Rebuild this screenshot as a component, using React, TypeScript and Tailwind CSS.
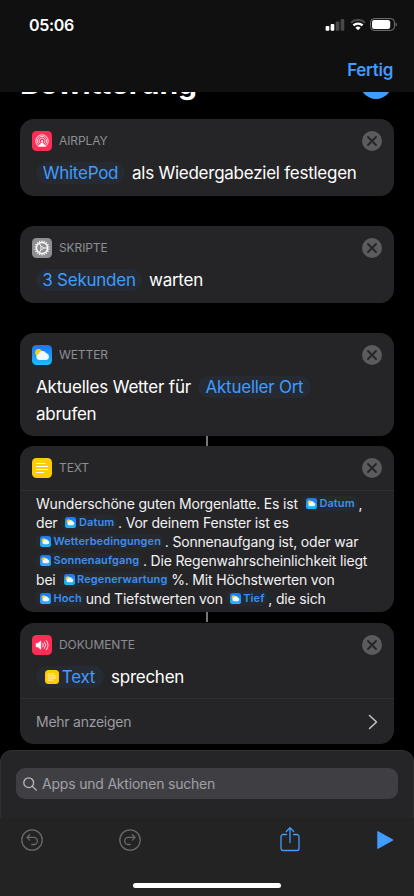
import { ReactNode } from 'react'
import clsx from 'clsx'

type AppKind = 'airplay' | 'skripte' | 'wetter' | 'text' | 'dokumente'

const TILE_COLORS: Record<AppKind, string> = {
    airplay: 'bg-[#ff2d55]',
    skripte: 'bg-[#8e8e93]',
    wetter: 'bg-linear-to-b from-[#2173f0] to-[#1fbcfb]',
    text: 'bg-[#ffcc00]',
    dokumente: 'bg-[#ff2d55]',
}

const TEETH = Array.from({ length: 18 }, (_, i) => i * 20)

function AppGlyph({ kind }: { kind: AppKind }) {
    return (
        <svg viewBox="0 0 20 20" className="block w-full h-full" fill="none" stroke="white">
            {kind === 'airplay' && (
                <>
                    <path d="M5.8 14.6a6.2 6.2 0 1 1 8.4 0" strokeWidth="0.9" />
                    <path d="M6.8 13.3a4.6 4.6 0 1 1 6.4 0" strokeWidth="0.8" />
                    <path d="M7.9 12a2.9 2.9 0 1 1 4.2 0" strokeWidth="0.8" />
                    <circle cx="10" cy="10" r="1.1" fill="white" stroke="none" />
                    <path d="M10 11.2l4.1 4.2H5.9z" fill="white" strokeWidth="0.5" strokeLinejoin="round" />
                </>
            )}
            {kind === 'skripte' && (
                <>
                    {TEETH.map((angle) => (
                        <path key={angle} d="M10 2.5v1.8" strokeWidth="1.1" transform={`rotate(${angle} 10 10)`} />
                    ))}
                    <circle cx="10" cy="10" r="5.5" strokeWidth="1.3" />
                    <circle cx="10" cy="10" r="1.4" strokeWidth="0.8" />
                    <path d="M11.4 10h4M9.3 8.8L7.2 5.3M9.3 11.2l-2.1 3.5" strokeWidth="1" />
                </>
            )}
            {kind === 'wetter' && (
                <>
                    <circle cx="6.6" cy="7.5" r="3.5" fill="#ffcc10" stroke="none" />
                    <path
                        d="M7 15a2.9 2.9 0 0 1-.5-5.7 4.1 4.1 0 0 1 7.7-1 3.4 3.4 0 0 1-.2 6.7z"
                        fill="#eff8ff"
                        stroke="none"
                    />
                </>
            )}
            {kind === 'text' && (
                <path d="M4.4 5.5h8.6M4.4 8.5h11.2M4.4 11.5h11.2M4.4 14.5h7.2" strokeWidth="1.1" strokeLinecap="round" />
            )}
            {kind === 'dokumente' && (
                <>
                    <path d="M4 8.3h1.9l3-2.5v8.8l-3-2.5H4z" fill="white" strokeWidth="0.4" strokeLinejoin="round" />
                    <path
                        d="M10.8 8.5a3 3 0 0 1 0 3.4M12.5 7a5.2 5.2 0 0 1 0 6.4M14.3 5.5a7.6 7.6 0 0 1 0 9.4"
                        strokeWidth="0.9"
                        strokeLinecap="round"
                    />
                </>
            )}
        </svg>
    )
}

function AppTile({ kind, className }: { kind: AppKind; className?: string }) {
    return (
        <span className={clsx('block shrink-0 overflow-hidden', TILE_COLORS[kind], className)}>
            <AppGlyph kind={kind} />
        </span>
    )
}

function StatusBar() {
    return (
        <div className="flex justify-between h-[50px] pl-[29px] pr-[17px]">
            <span className="mt-[15px] text-[16px] leading-5 font-semibold tracking-[-0.3px]">05:06</span>
            <div className="flex items-start gap-[5px] mt-[18px]">
                <svg width="20" height="13" viewBox="0 0 20 13" className="mt-px">
                    <rect x="0.6" y="7" width="3.7" height="4.7" rx="1" fill="white" />
                    <rect x="5.6" y="5" width="3.7" height="6.7" rx="1" fill="white" />
                    <rect x="10.7" y="2.6" width="3.7" height="9.1" rx="1" fill="#48484a" />
                    <rect x="15.6" y="0" width="3.7" height="11.7" rx="1" fill="#48484a" />
                </svg>
                <svg width="16" height="13" viewBox="0 0 16 13" fill="none">
                    <path d="M1 4.7a10.2 10.2 0 0 1 14 0" stroke="#48484a" strokeWidth="2.2" />
                    <path d="M3.4 7.4a6.7 6.7 0 0 1 9.2 0" stroke="white" strokeWidth="2.2" />
                    <path d="M8 12.2L5.4 9.7a3.8 3.8 0 0 1 5.2 0z" fill="white" />
                </svg>
                <svg width="27" height="13" viewBox="0 0 27 13" fill="none" className="-ml-px">
                    <rect x="0.6" y="0.6" width="23.8" height="11.8" rx="3.6" stroke="#77777a" strokeWidth="1" />
                    <rect x="2" y="2" width="18.2" height="9" rx="2.2" fill="white" />
                    <path d="M25.6 4.5c1 .4 1.2 1.2 1.2 2s-.2 1.6-1.2 2z" fill="#77777a" />
                </svg>
            </div>
        </div>
    )
}

function CloseButton() {
    return (
        <button className="ml-auto w-5 h-5 rounded-full bg-[#5b5b5d]" aria-label="Entfernen">
            <svg viewBox="0 0 20 20" fill="none" stroke="#252527" strokeWidth="1.9" strokeLinecap="round">
                <path d="M6 6l8 8M14 6l-8 8" />
            </svg>
        </button>
    )
}

function Card({ kind, title, className, children }: {
    kind: AppKind
    title: string
    className: string
    children: ReactNode
}) {
    return (
        <section className={clsx('mx-5 shrink-0 rounded-[14px] bg-[#252527] overflow-hidden', className)}>
            <div className="flex items-center h-5 mt-3 mx-3">
                <AppTile kind={kind} className="w-5 h-5 rounded-[4.5px]" />
                <h2 className="ml-[7px] text-[12px] text-[#8d8d92] tracking-[-0.1px]">{title}</h2>
                <CloseButton />
            </div>
            {children}
        </section>
    )
}

function Row({ className, children }: { className?: string; children: ReactNode }) {
    return (
        <div className={clsx('flex items-center h-[27px] pl-4 text-[17px] tracking-[-0.25px] whitespace-nowrap [&>span]:pt-0.5', className)}>
            {children}
        </div>
    )
}

function Chip({ className, children }: { className?: string; children: ReactNode }) {
    return (
        <span className={clsx('flex items-center justify-center h-[22px] rounded-full bg-[#252a33] text-[#409cff]', className)}>
            {children}
        </span>
    )
}

function Variable({ className, children }: { className?: string; children: ReactNode }) {
    return (
        <span
            className={clsx(
                'inline-flex items-center gap-[2.5px] h-[15px] pl-1 pr-0.5 -mr-[2px] rounded-[5px] bg-[#252930]',
                'text-[11px] font-semibold text-[#3c8ff0] tracking-[0.1px]',
                className
            )}
        >
            <AppTile kind="wetter" className="w-[11px] h-[11px] rounded-[2.5px]" />
            {children}
        </span>
    )
}

function Line({ children }: { children: ReactNode }) {
    return <div className="flex items-center h-[19px] whitespace-pre">{children}</div>
}

function Connector() {
    return <div className="self-center shrink-0 w-0.5 h-[10px] bg-[#77777b]" />
}

export default function App() {
    return (
        <div className="flex flex-col w-full h-[896px] overflow-hidden bg-black text-white font-[Inter,sans-serif]">
            <header className="relative z-10 shrink-0 h-[92px] bg-[#101010]">
                <StatusBar />
                <div className="flex justify-end pr-[21px] pt-2">
                    <button className="text-[17px] leading-6 font-semibold text-[#409cff] tracking-[-0.3px]">Fertig</button>
                </div>
            </header>

            {/* Title scrolls under the header */}
            <div className="flex justify-between shrink-0 h-12 -mt-[21px] pl-[20px] pr-[22px]">
                <h1 className="text-[30px] leading-[24px] font-bold tracking-[-0.1px]">Bewitterung</h1>
                <div className="w-8 h-7 rounded-b-full bg-[#409cff]" />
            </div>

            <Card kind="airplay" title="AIRPLAY" className="h-[77px]">
                <Row className="mt-2">
                    <Chip className="w-[89px]">WhitePod</Chip>
                    <span className="ml-[7px]">als Wiedergabeziel festlegen</span>
                </Row>
            </Card>

            <Card kind="skripte" title="SKRIPTE" className="h-[77px] mt-[30px]">
                <Row className="mt-2">
                    <Chip className="w-[106px]">3 Sekunden</Chip>
                    <span className="ml-[7px]">warten</span>
                </Row>
            </Card>

            <Card kind="wetter" title="WETTER" className="h-[103px] mt-[30px]">
                <Row className="mt-2">
                    <span className="w-[162px] tracking-[-0.18px]">Aktuelles Wetter für</span>
                    <Chip className="w-[113px]">Aktueller Ort</Chip>
                </Row>
                <Row>
                    <span>abrufen</span>
                </Row>
            </Card>

            <Connector />

            <Card kind="text" title="TEXT" className="h-[166px]">
                <div className="mt-3 pt-[3px] pl-4 border-t border-[#303033] text-[14px] text-[#f2f2f4] tracking-[-0.18px]">
                    <Line>
                        Wunderschöne guten Morgenlatte. Es ist<Variable className="ml-1">Datum</Variable> ,
                    </Line>
                    <Line>
                        der<Variable className="ml-1">Datum</Variable> . Vor deinem Fenster ist es
                    </Line>
                    <Line>
                        <Variable>Wetterbedingungen</Variable> . Sonnenaufgang ist, oder war
                    </Line>
                    <Line>
                        <Variable>Sonnenaufgang</Variable> . Die Regenwahrscheinlichkeit liegt
                    </Line>
                    <Line>
                        bei<Variable className="ml-1">Regenerwartung</Variable> %. Mit Höchstwerten von
                    </Line>
                    <Line>
                        <Variable>Hoch</Variable> und Tiefstwerten von<Variable className="ml-[3px]">Tief</Variable> , die sich
                    </Line>
                </div>
            </Card>

            <Connector />

            <Card kind="dokumente" title="DOKUMENTE" className="h-[121px] mt-px">
                <Row className="mt-2">
                    <Chip className="w-[68px] gap-[3px]">
                        <AppTile kind="text" className="w-[14px] h-[14px] -mt-0.5 rounded-[3.5px]" />
                        Text
                    </Chip>
                    <span className="ml-[7px]">sprechen</span>
                </Row>
                <div className="flex items-center justify-between h-[46px] mt-2 pl-4 pr-4 border-t border-[#303033]">
                    <span className="text-[14px] text-[#9b9ba1] tracking-[-0.25px]">Mehr anzeigen</span>
                    <svg width="10" height="16" viewBox="0 0 10 16" fill="none" stroke="#c5c5ca" strokeWidth="1.5" strokeLinecap="round" strokeLinejoin="round">
                        <path d="M1.5 1.5L8.5 8l-7 6.5" />
                    </svg>
                </div>
            </Card>

            <div className="shrink-0 h-[68px] mt-1.5 px-[15px] pt-[17px] rounded-t-[12px] bg-[#252527] border border-b-0 border-[#303032]">
                <div className="flex items-center h-[31px] pl-[7px] rounded-[9px] bg-[#3f3e43]">
                    <svg width="14" height="14" viewBox="0 0 14 14" fill="none" stroke="#b9b9bf" strokeWidth="1.3" strokeLinecap="round">
                        <circle cx="5.7" cy="5.7" r="4.9" />
                        <path d="M9.3 9.3l4 3.8" />
                    </svg>
                    <span className="ml-[5px] text-[14px] text-[#a0a0a7] tracking-[-0.2px]">Apps und Aktionen suchen</span>
                </div>
            </div>

            <footer className="flex flex-col shrink-0 h-[78px] bg-[#232323]">
                <div className="flex items-center h-11 pl-[21px]">
                    <svg width="22" height="22" viewBox="0 0 22 22" fill="none" stroke="#69696b" strokeWidth="1.3" strokeLinecap="round" strokeLinejoin="round">
                        <circle cx="11" cy="11" r="10.2" />
                        <path d="M8.7 5.7L5.9 8.4l2.8 2.7M6 8.4h6.8a3.5 3.5 0 0 1 0 7.1h-2" />
                    </svg>
                    <svg width="22" height="22" viewBox="0 0 22 22" fill="none" stroke="#69696b" strokeWidth="1.3" strokeLinecap="round" strokeLinejoin="round" className="ml-[76px]">
                        <circle cx="11" cy="11" r="10.2" />
                        <path d="M13.3 5.7l2.8 2.7-2.8 2.7M16 8.4H9.2a3.5 3.5 0 0 0 0 7.1h2" />
                    </svg>
                    <svg width="20" height="26" viewBox="0 0 20 26" fill="none" stroke="#409cff" strokeWidth="1.3" strokeLinecap="round" strokeLinejoin="round" className="ml-[139px] -mt-0.5">
                        <path d="M6.5 8.5H3.2A2.2 2.2 0 0 0 1 10.7v11.6a2.2 2.2 0 0 0 2.2 2.2h13.6a2.2 2.2 0 0 0 2.2-2.2V10.7a2.2 2.2 0 0 0-2.2-2.2h-3.3" />
                        <path d="M10 16.5V2M6.3 5.5L10 1.7l3.7 3.8" />
                    </svg>
                    <svg width="18" height="20" viewBox="0 0 18 20" fill="#409cff" stroke="#409cff" strokeWidth="1" strokeLinejoin="round" className="ml-[76px]">
                        <path d="M1.8 1.5L17 10 1.8 18.5z" />
                    </svg>
                </div>
                <div className="self-center w-[148px] h-[5px] mt-[21px] rounded-full bg-white" />
            </footer>
        </div>
    )
}
